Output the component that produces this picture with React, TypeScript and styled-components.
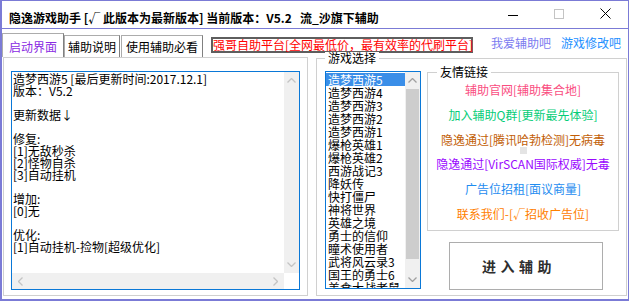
import styled, { createGlobalStyle } from "styled-components";

const ACCENT = "#7b7bd6";

const GlobalStyle = createGlobalStyle`
  html, body {
    margin: 0;
    padding: 0;
    background: #ffffff;
  }
  body {
    font-family: "Noto Sans CJK SC", "Noto Sans", sans-serif;
    font-size: 12px;
    color: #000;
  }
`;

const Window = styled.div`
  width: 629px;
  height: 301px;
  box-sizing: border-box;
  border: 1px solid ${ACCENT};
  border-left-width: 2px;
  border-bottom-width: 2px;
  display: flex;
  flex-direction: column;
  overflow: hidden;
  background: #fff;
`;

const TitleBar = styled.div`
  display: flex;
  flex-shrink: 0;
  height: 27px;
  border-bottom: 1px solid ${ACCENT};
`;

const Title = styled.div`
  flex: 1;
  padding: 10px 0 0 7px;
  font-weight: 700;
  line-height: 14px;
  white-space: pre;
`;

const CtrlButton = styled.div`
  width: 46px;
  height: 25px;
  display: flex;
  align-items: center;
  justify-content: center;
`;

const TopRow = styled.div`
  display: flex;
  align-items: flex-end;
  flex-shrink: 0;
  height: 28px;
`;

const Tab = styled.div<{ $active?: boolean; $w: number; $gap?: number }>`
  width: ${(p) => p.$w}px;
  height: ${(p) => (p.$active ? 24 : 22)}px;
  margin-left: ${(p) => p.$gap ?? 0}px;
  box-sizing: border-box;
  border: 1px solid #acacac;
  border-bottom: none;
  border-right-color: #808080;
  padding-top: ${(p) => (p.$active ? 6 : 4)}px;
  line-height: 14px;
  text-align: center;
  background: #fff;
  color: ${(p) => (p.$active ? "#8a2be2" : "#000")};
`;

const PromoBox = styled.div`
  align-self: flex-start;
  margin: 8px 0 0 8px;
  width: 262px;
  height: 16px;
  box-sizing: border-box;
  border: 2px solid #5e5e5e;
  color: #ff0000;
  line-height: 12px;
  text-align: center;
  white-space: nowrap;
`;

const TopLink = styled.div<{ $color: string; $gap: number }>`
  align-self: flex-start;
  margin: 7px 0 0 ${(p) => p.$gap}px;
  line-height: 14px;
  color: ${(p) => p.$color};
  white-space: nowrap;
`;

const MainRow = styled.div`
  display: flex;
  flex: 1;
  min-height: 0;
  padding-bottom: 3px;
`;

const TabPanel = styled.div`
  margin-left: 1px;
  width: 305px;
  box-sizing: border-box;
  border: 1px solid #d0d0d0;
  padding: 13px 7px 5px;
  display: flex;
`;

const TextArea = styled.div`
  flex: 1;
  border: 1px solid #0a78d7;
  display: grid;
  grid-template-columns: 1fr 15px;
  grid-template-rows: 1fr 16px;
`;

const TextBody = styled.div`
  padding: 1px 0 0 1px;
  line-height: 12px;
  white-space: pre;
  overflow: hidden;
`;

const VScroll = styled.div`
  background: #f0f0f0;
  display: flex;
  flex-direction: column;
`;

const HScroll = styled.div`
  background: #f0f0f0;
  display: flex;
  justify-content: space-between;
`;

const ArrowCell = styled.div`
  flex: 0 0 17px;
  display: flex;
  align-items: center;
  justify-content: center;
`;

const Track = styled.div`
  flex: 1;
`;

const Thumb = styled.div<{ $h: number }>`
  flex: 0 0 ${(p) => p.$h}px;
  margin: 0 1px;
  background: #cdcdcd;
`;

const Corner = styled.div`
  background: #fff;
`;

const GroupBox = styled.div<{ $w: number }>`
  position: relative;
  width: ${(p) => p.$w}px;
  box-sizing: border-box;
  border: 1px solid #d0d0d0;
`;

const GameGroup = styled(GroupBox)`
  margin: 1px 0 0 8px;
  padding: 12px 7px 6px 8px;
  display: flex;
  align-items: flex-start;
`;

const GroupLabel = styled.span<{ $left: number }>`
  position: absolute;
  top: -7px;
  left: ${(p) => p.$left}px;
  padding: 0 3px;
  background: #fff;
  line-height: 12px;
`;

const ListBox = styled.div`
  width: 96px;
  height: 218px;
  box-sizing: border-box;
  border: 1px solid #0a78d7;
  display: flex;
`;

const ListItems = styled.div`
  flex: 1;
  padding-top: 1px;
  overflow: hidden;
`;

const ListItem = styled.div<{ $selected?: boolean }>`
  height: 13px;
  line-height: 13px;
  padding-left: 2px;
  white-space: nowrap;
  background: ${(p) => (p.$selected ? "#3a8ee8" : "transparent")};
  color: ${(p) => (p.$selected ? "#fff" : "#000")};
`;

const ListScroll = styled(VScroll)`
  width: 15px;
`;

const RightCol = styled.div`
  margin: 1px 0 0 6px;
  width: 192px;
  display: flex;
  flex-direction: column;
`;

const FriendBox = styled(GroupBox)`
  height: 159px;
  padding-top: 5px;
`;

const FriendLink = styled.div<{ $color: string }>`
  line-height: 24.75px;
  text-align: center;
  white-space: nowrap;
  color: ${(p) => p.$color};
`;

const Speck = styled.div`
  position: absolute;
  left: 92px;
  top: 74px;
  width: 7px;
  height: 7px;
  background: #e4e4e4;
`;

const EnterButton = styled.button`
  margin: 11px 0 0 22px;
  width: 154px;
  height: 48px;
  box-sizing: border-box;
  border: 1px solid #adadad;
  background: #fff;
  padding: 0 14px 0 0;
  font-family: inherit;
  font-size: 14px;
  font-weight: 700;
  letter-spacing: 4.5px;
  color: #2e2e2e;
  display: flex;
  align-items: center;
  justify-content: center;
`;

type Dir = "up" | "down" | "left" | "right";

const Chevron = ({ dir, color }: { dir: Dir; color: string }) => {
  const pts: Record<Dir, string> = {
    up: "0.5,4.5 4.5,0.5 8.5,4.5",
    down: "0.5,0.5 4.5,4.5 8.5,0.5",
    left: "4.5,0.5 0.5,4.5 4.5,8.5",
    right: "0.5,0.5 4.5,4.5 0.5,8.5",
  };
  const vertical = dir === "up" || dir === "down";
  return (
    <svg width={vertical ? 9 : 5} height={vertical ? 5 : 9}>
      <polyline points={pts[dir]} fill="none" stroke={color} strokeWidth="1.3" />
    </svg>
  );
};

const NOTES = `造梦西游5 [最后更新时间:2017.12.1]
版本：V5.2

更新数据↓

修复:
[1]无敌秒杀
[2]怪物自杀
[3]自动挂机

增加:
[0]无

优化:
[1]自动挂机-捡物[超级优化]`;

const GAMES = [
  "造梦西游5",
  "造梦西游4",
  "造梦西游3",
  "造梦西游2",
  "造梦西游1",
  "爆枪英雄1",
  "爆枪英雄2",
  "西游战记3",
  "降妖传",
  "快打僵尸",
  "神将世界",
  "英雄之境",
  "勇士的信仰",
  "瞳术使用者",
  "武将风云录3",
  "国王的勇士6",
  "美食大战老鼠",
];

const LINKS = [
  { text: "辅助官网[辅助集合地]", color: "#fa4d7f" },
  { text: "加入辅助Q群[更新最先体验]", color: "#05cd78" },
  { text: "隐逸通过[腾讯哈勃检测]无病毒", color: "#c25e06" },
  { text: "隐逸通过[VirSCAN国际权威]无毒", color: "#9a08ff" },
  { text: "广告位招租[面议商量]", color: "#1e8cf0" },
  { text: "联系我们-[√招收广告位]", color: "#ff8000" },
];

const App = () => {
  return (
    <>
      <GlobalStyle />
      <Window>
        <TitleBar>
          <Title>{"隐逸游戏助手 [√ 此版本为最新版本] 当前版本：V5.2   流_沙旗下辅助"}</Title>
          <CtrlButton>
            <svg width="10" height="10">
              <line x1="0" y1="6.5" x2="10" y2="6.5" stroke="#000" strokeWidth="1" />
            </svg>
          </CtrlButton>
          <CtrlButton>
            <svg width="10" height="10">
              <rect x="0.5" y="0.5" width="9" height="9" fill="none" stroke="#c4c4c4" />
            </svg>
          </CtrlButton>
          <CtrlButton>
            <svg width="11" height="11">
              <path d="M0.5 0.5 L10.5 10.5 M10.5 0.5 L0.5 10.5" stroke="#000" strokeWidth="1" />
            </svg>
          </CtrlButton>
        </TitleBar>

        <TopRow>
          <Tab $active $w={62}>启动界面</Tab>
          <Tab $w={56}>辅助说明</Tab>
          <Tab $w={82} $gap={1}>使用辅助必看</Tab>
          <PromoBox>强哥自助平台[全网最低价，最有效率的代刷平台]</PromoBox>
          <TopLink $color="#7b7bf0" $gap={18}>我爱辅助吧</TopLink>
          <TopLink $color="#1e90ff" $gap={10}>游戏修改吧</TopLink>
        </TopRow>

        <MainRow>
          <TabPanel>
            <TextArea>
              <TextBody>{NOTES}</TextBody>
              <VScroll>
                <ArrowCell>
                  <Chevron dir="up" color="#c4c4c4" />
                </ArrowCell>
                <Track />
                <ArrowCell>
                  <Chevron dir="down" color="#c4c4c4" />
                </ArrowCell>
              </VScroll>
              <HScroll>
                <ArrowCell>
                  <Chevron dir="left" color="#c4c4c4" />
                </ArrowCell>
                <ArrowCell>
                  <Chevron dir="right" color="#c4c4c4" />
                </ArrowCell>
              </HScroll>
              <Corner />
            </TextArea>
          </TabPanel>

          <GameGroup $w={311}>
            <GroupLabel $left={8}>游戏选择</GroupLabel>
            <ListBox>
              <ListItems>
                {GAMES.map((g, i) => (
                  <ListItem key={g} $selected={i === 0}>
                    {g}
                  </ListItem>
                ))}
              </ListItems>
              <ListScroll>
                <ArrowCell>
                  <Chevron dir="up" color="#a0a0a0" />
                </ArrowCell>
                <Thumb $h={170} />
                <Track />
                <ArrowCell>
                  <Chevron dir="down" color="#a0a0a0" />
                </ArrowCell>
              </ListScroll>
            </ListBox>

            <RightCol>
              <FriendBox $w={192}>
                <GroupLabel $left={9}>友情链接</GroupLabel>
                {LINKS.map((l) => (
                  <FriendLink key={l.text} $color={l.color}>
                    {l.text}
                  </FriendLink>
                ))}
                <Speck />
              </FriendBox>
              <EnterButton>进入辅助</EnterButton>
            </RightCol>
          </GameGroup>
        </MainRow>
      </Window>
    </>
  );
};

export default App;
